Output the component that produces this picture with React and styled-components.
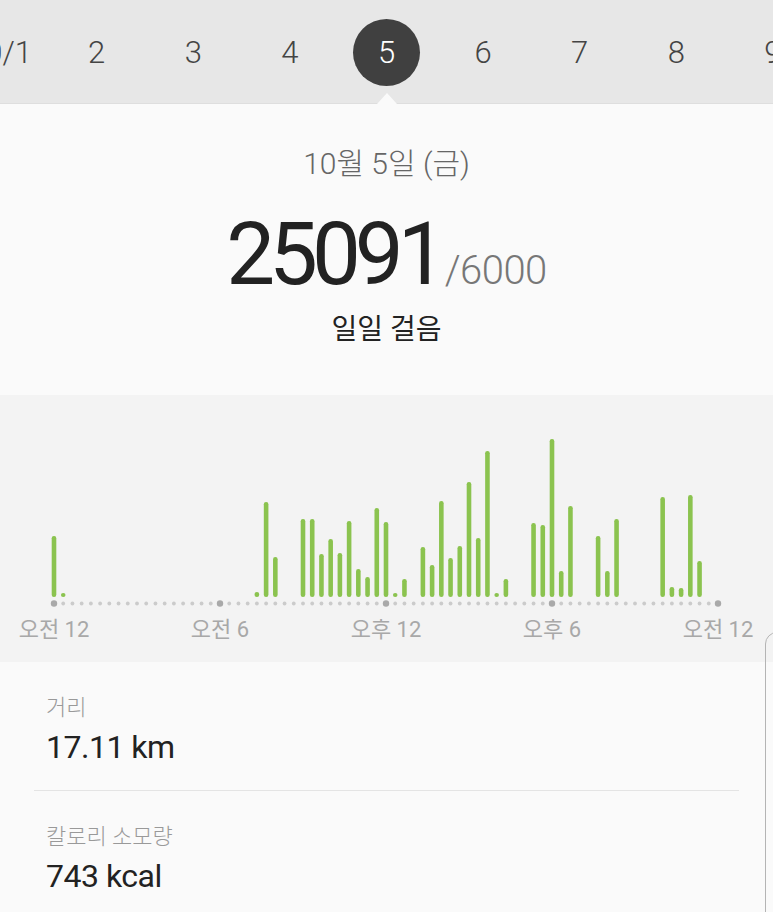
import React from "react";
import styled, { createGlobalStyle } from "styled-components";

const GlobalStyle = createGlobalStyle`
  html, body {
    margin: 0;
    padding: 0;
    background: #fafafa;
    overflow: hidden;
  }
  body {
    font-family: "Roboto", "Noto Sans CJK KR", sans-serif;
  }
`;

const days = ["10/1", "2", "3", "4", "5", "6", "7", "8", "9"];

// [slot (20 min each), top y of the bar in page px]
const bars = [
  [0, 536], [1, 593], [22, 592], [23, 502], [24, 557], [27, 519], [28, 519],
  [29, 554], [30, 539], [31, 553], [32, 521], [33, 569], [34, 577], [35, 508],
  [36, 522], [37, 593], [38, 579], [40, 547], [41, 565], [42, 501], [43, 558],
  [44, 546], [45, 482], [46, 538], [47, 451], [48, 594], [49, 579], [52, 523],
  [53, 525], [54, 439], [55, 571], [56, 506], [59, 536], [60, 571], [61, 519],
  [66, 497], [67, 587], [68, 588], [69, 495], [70, 561],
];

const axisLabels = ["오전 12", "오전 6", "오후 12", "오후 6", "오전 12"];

const CHART_TOP = 395;
const X0 = 54;
const STEP = (718 - 54) / 72;
const BASE = 597 - CHART_TOP;

const App = () => {
  return (
    <Page>
      <GlobalStyle />
      <DateStrip>
        {days.map((d) => (
          <DateItem key={d} $active={d === "5"}>
            <DateNum $active={d === "5"}>{d}</DateNum>
          </DateItem>
        ))}
      </DateStrip>

      <Summary>
        <DayLabel>10월 5일 (금)</DayLabel>
        <StepsRow>
          <Steps>25091</Steps>
          <Goal>/6000</Goal>
        </StepsRow>
        <StepsCaption>일일 걸음</StepsCaption>
      </Summary>

      <ChartPanel>
        <svg width="773" height="267" viewBox="0 0 773 267">
          {Array.from({ length: 73 }).map((_, i) => {
            const major = i % 18 === 0;
            return (
              <circle
                key={i}
                cx={X0 + i * STEP}
                cy={208.5}
                r={major ? 3.2 : 1.9}
                fill={major ? "#a9a9a9" : "#cbcbcb"}
              />
            );
          })}
          {bars.map(([slot, top]) => {
            const h = Math.max(BASE - (top - CHART_TOP), 4);
            return (
              <rect
                key={slot}
                x={X0 + slot * STEP - 2.3}
                y={BASE - h}
                width="4.6"
                height={h}
                rx="2.2"
                fill="#8bc34f"
              />
            );
          })}
          {axisLabels.map((l, i) => (
            <text
              key={i}
              x={X0 + i * 18 * STEP}
              y={242}
              textAnchor="middle"
              fontSize="22"
              fill="#a8a8a8"
              fontFamily="Roboto, 'Noto Sans CJK KR', sans-serif"
            >
              {l}
            </text>
          ))}
        </svg>
      </ChartPanel>

      <StatList>
        <StatItem>
          <StatLabel>거리</StatLabel>
          <StatValue>17.11 km</StatValue>
        </StatItem>
        <StatItem>
          <StatLabel>칼로리 소모량</StatLabel>
          <StatValue>743 kcal</StatValue>
        </StatItem>
      </StatList>

      <PeekCard />
    </Page>
  );
};

export default App;

const Page = styled.div`
  position: relative;
  width: 773px;
  height: 912px;
  overflow: hidden;
  background: #fafafa;
`;

const DateStrip = styled.div`
  display: flex;
  justify-content: center;
  height: 104px;
  background: #e7e7e7;
  border-bottom: 1px solid #dedede;
  box-sizing: border-box;
`;

const DateItem = styled.div`
  position: relative;
  flex: 0 0 96.6px;
  display: flex;
  align-items: center;
  justify-content: center;
  padding-top: 2px;

  ${({ $active }) =>
    $active &&
    `
    &::after {
      content: "";
      position: absolute;
      left: 50%;
      bottom: -1px;
      margin-left: -10px;
      border-left: 10px solid transparent;
      border-right: 10px solid transparent;
      border-bottom: 11px solid #fafafa;
    }
  `}
`;

const DateNum = styled.div`
  display: flex;
  align-items: center;
  justify-content: center;
  width: 67px;
  height: 67px;
  border-radius: 50%;
  font-size: 31px;
  font-weight: 300;
  color: ${({ $active }) => ($active ? "#ffffff" : "#444444")};
  background: ${({ $active }) => ($active ? "#404040" : "transparent")};
`;

const Summary = styled.div`
  display: flex;
  flex-direction: column;
  align-items: center;
  padding: 40px 0 46px;
  height: 291px;
  box-sizing: border-box;
`;

const DayLabel = styled.div`
  font-size: 30px;
  line-height: 40px;
  font-weight: 300;
  color: #666666;
`;

const StepsRow = styled.div`
  display: flex;
  align-items: baseline;
  margin-top: 27px;
  line-height: 1;
`;

const Steps = styled.span`
  font-size: 87px;
  letter-spacing: -6px;
  color: #222222;
  margin-right: 4px;
`;

const Goal = styled.span`
  font-size: 40px;
  font-weight: 300;
  letter-spacing: -0.5px;
  color: #777777;
`;

const StepsCaption = styled.div`
  margin-top: 14px;
  font-size: 28px;
  line-height: 36px;
  font-weight: 400;
  color: #222222;
`;

const ChartPanel = styled.div`
  height: 267px;
  background: #f3f3f3;

  svg {
    display: block;
  }
`;

const StatList = styled.div`
  padding: 0 34px;
`;

const StatItem = styled.div`
  padding: 30px 12px 23px;

  & + & {
    border-top: 1px solid #e4e4e4;
  }
`;

const StatLabel = styled.div`
  font-size: 22px;
  line-height: 32px;
  font-weight: 300;
  color: #999999;
`;

const StatValue = styled.div`
  margin-top: 3px;
  font-size: 32px;
  line-height: 40px;
  font-weight: 400;
  letter-spacing: -0.5px;
  color: #222222;
`;

const PeekCard = styled.div`
  position: absolute;
  left: 765px;
  top: 632px;
  width: 40px;
  height: 320px;
  border: 1.5px solid #b4b4b4;
  border-radius: 12px 0 0 0;
`;
